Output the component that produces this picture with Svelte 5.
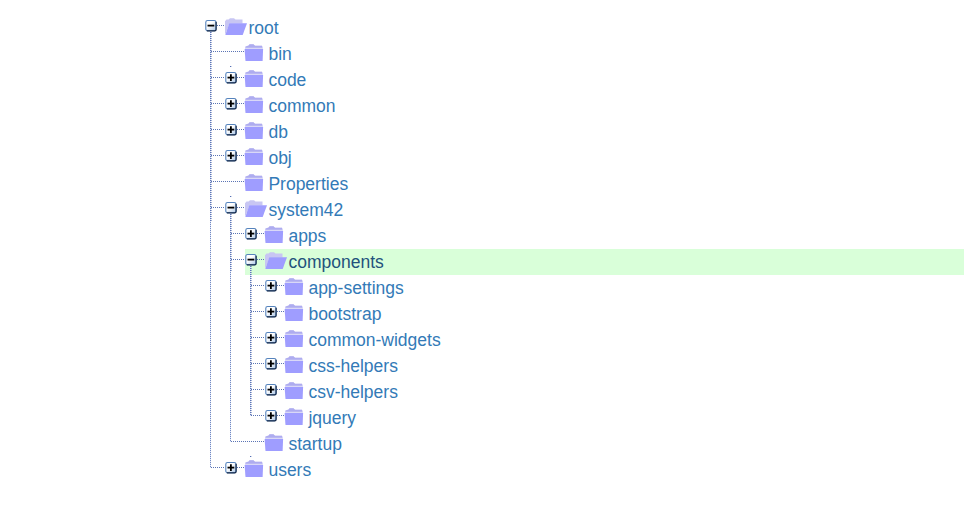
<script>
  const tree = [
    { name: 'root', open: true, dense: 190, children: [
      { name: 'bin' },
      { name: 'code', plus: true, dot: true },
      { name: 'common', plus: true },
      { name: 'db', plus: true },
      { name: 'obj', plus: true },
      { name: 'Properties' },
      { name: 'system42', open: true, dot: true, dense: 58, children: [
        { name: 'apps', plus: true },
        { name: 'components', open: true, selected: true, dense: 150, children: [
          { name: 'app-settings', plus: true },
          { name: 'bootstrap', plus: true },
          { name: 'common-widgets', plus: true },
          { name: 'css-helpers', plus: true },
          { name: 'csv-helpers', plus: true },
          { name: 'jquery', plus: true }
        ] },
        { name: 'startup' }
      ] },
      { name: 'users', plus: true, dot: true, dotShift: 20 }
    ] }
  ];
  const count = (n) => 1 + (n.children ?? []).reduce((s, c) => s + count(c), 0);
  // Height of a guide line: from the toggle down to the last child's connector.
  const guide = (n) => (count(n) - count(n.children[n.children.length - 1])) * 26 - 6;
</script>

{#snippet node(n, depth)}
  <li>
    <div class="row" class:selected={n.selected}>
      <svg class="icons" width="44" height="26" viewBox="0 0 44 26">
        {#if depth > 0}
          <path class="dots" d={n.open || n.plus ? 'M-14 10.5H0' : 'M-14 10.5H20'} />
        {/if}
        {#if n.dot}
          <rect x={5 + (n.dotShift ?? 0)} y="-1" width="1.3" height="1" fill="#5570b4" />
        {/if}
        {#if n.open || n.plus}
          <path class="dots" d="M12 10.5H20" />
          <rect x=".8" y="5.5" width="10.2" height="10.2" rx="1.8" fill="url(#face)" stroke="#5583bd" stroke-width="1.1" />
          <path d="M1.8 15.8H9.8Q11.1 15.8 11.1 14.5V6.8" fill="none" stroke="#142848" stroke-width="1.2" />
          <path d="M2.5 10.6H9.3" stroke="#000" stroke-width="1.8" />
          {#if n.plus}<path d="M5.9 7.2V14" stroke="#000" stroke-width="1.8" />{/if}
        {/if}
        {#if n.open}
          <path d="M20 18.5V6.2L21.5 4.6H23.5L25 3.2H29L30.5 4.6H37.5V8.5H24.5L20.5 19Z" fill="#c8c6f3" />
          <path d="M24.3 8.3H42L37.7 20H20.3Z" fill="#9f9dff" />
        {:else}
          <path d="M20 8V5.7L23.5 4.6L24.5 3.2H28.5L30 4.7H37L38 8Z" fill="#d9d8f7" />
          <path d="M20.6 6.7V5.4L23.7 4.6L24.5 3.2H28.5L30 4.8H37L37.5 6.7Z" fill="#aeacf0" />
          <path d="M19.6 8H38.1L37.6 20H20.5Z" fill="#9f9dff" />
        {/if}
      </svg>
      <span>{n.name}</span>
    </div>
    {#if n.children}
      <div class="line" style:height="{guide(n)}px"></div>
      <div class="line dense" style:height="{Math.min(n.dense, guide(n))}px"></div>
      <ul>
        {#each n.children as c}{@render node(c, depth + 1)}{/each}
      </ul>
    {/if}
  </li>
{/snippet}

<svg class="defs" width="0" height="0">
  <defs>
    <linearGradient id="face" x1="0" y1="0" x2="1" y2="1">
      <stop offset=".4" stop-color="#fff" />
      <stop offset="1" stop-color="#a9c4e4" />
    </linearGradient>
  </defs>
</svg>
<ul class="tree">
  {#each tree as n}{@render node(n, 0)}{/each}
</ul>

<style>
  :global(body) { background: #fff; }
  .defs { position: absolute; }
  ul { list-style: none; margin: 0; padding: 0 0 0 20px; }
  .tree { padding: 15px 0 0 205px; font: 17.5px/26px "Liberation Sans", Arial, sans-serif; color: #337ab7; }
  li { position: relative; }
  .row { display: flex; height: 26px; white-space: nowrap; }
  .selected { background: #d9ffd9; color: #23527c; }
  .icons { overflow: visible; flex: none; position: relative; z-index: 1; margin-right: -.6px; }
  .dots { fill: none; stroke: #5b74b5; stroke-width: 1.2; stroke-dasharray: 1 1; }
  .line {
    position: absolute;
    left: 5px;
    top: 17px;
    width: 1px;
    background: repeating-linear-gradient(#7189c4 0 1px, #e3e8f5 1px 2px);
  }
  .dense {
    width: 2px;
    background: repeating-linear-gradient(#4a65ad 0 1px, transparent 1px 2px);
    opacity: .5;
  }
</style>
